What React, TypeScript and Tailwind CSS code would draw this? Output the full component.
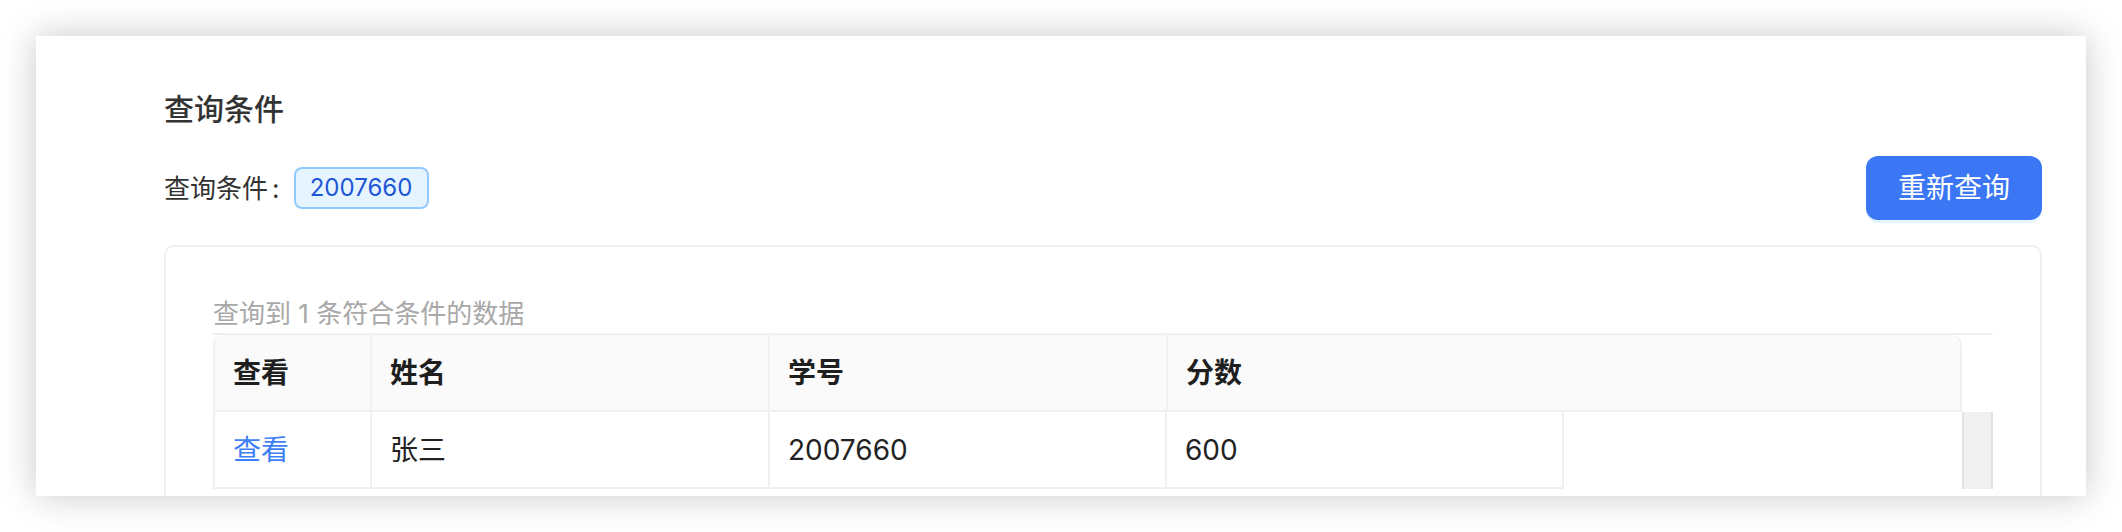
import React from "react";

type Row = { name: string; id: string; score: string };

const rows: Row[] = [{ name: "张三", id: "2007660", score: "600" }];

const headers = ["查看", "姓名", "学号", "分数"];
// column widths in px, borders included
const colWidths = ["w-[159px]", "w-[398px]", "w-[397px]", "w-[397px]"];

function ResultTable() {
  return (
    <div className="w-[1780px] border-t-2 border-[#f0f0f0]">
      {/* header */}
      <div className="flex h-[77px]">
        <div className="flex flex-1 rounded-t-[10px] border-b-2 border-[#f0f0f0] bg-[#fafafa]">
          {headers.map((h, i) => (
            <div
              key={h}
              className={
                "flex items-center pl-[18px] text-[28px] font-semibold text-[#1f1f1f] " +
                (i === 0
                  ? "w-[159px] rounded-tl-[10px] border-x-2 border-[#f0f0f0]"
                  : i === 3
                  ? "flex-1 rounded-tr-[10px] border-r-2 border-[#f0f0f0]"
                  : "w-[398px] border-r-2 border-[#f0f0f0]")
              }
            >
              {h}
            </div>
          ))}
        </div>
        <div className="w-[31px] rounded-tr-[10px] bg-white" />
      </div>

      {/* body */}
      {rows.map((r) => (
        <div key={r.id} className="flex h-[77px]">
          <div className="flex w-[1749px]">
            <div className={colWidths[0] + " flex items-center border-x-2 border-b-2 border-[#f0f0f0] pl-[18px] text-[28px] text-[#3d7ff6]"}>
              查看
            </div>
            <div className={colWidths[1] + " flex items-center border-r-2 border-b-2 border-[#f0f0f0] pl-[18px] text-[28px] text-[#222]"}>
              {r.name}
            </div>
            <div className={colWidths[2] + " flex items-center border-r-2 border-b-2 border-[#f0f0f0] pl-[18px] text-[28px] text-[#222]"}>
              {r.id}
            </div>
            <div className={colWidths[3] + " flex items-center border-r-2 border-b-2 border-[#f0f0f0] pl-[18px] text-[28px] text-[#222]"}>
              {r.score}
            </div>
          </div>
          <div className="w-[31px] border-x-2 border-[#e2e2e2] bg-[#f0f0f0]" />
        </div>
      ))}
    </div>
  );
}

export default function App() {
  return (
    <div className="h-[532px] w-[2122px] overflow-hidden bg-white p-[36px] font-['Inter','Noto_Sans_CJK_SC',sans-serif]">
      <div className="h-[460px] overflow-hidden bg-white pl-[128px] pr-[44px] pt-[51px] shadow-[0_0_34px_rgba(0,0,0,0.22)]">
        <h2 className="text-[30px] font-medium leading-[44px] text-[#333]">查询条件</h2>

        <div className="mt-[25px] flex items-center justify-between">
          <div className="flex items-center text-[26px] text-[#333]">
            <span>查询条件</span>
            <span className="ml-[4px]">:</span>
            <span className="ml-[14px] flex h-[42px] w-[135px] items-center justify-center rounded-[8px] border-2 border-[#91caff] bg-[#e6f4ff] text-[24px] text-[#1d56d6]">
              2007660
            </span>
          </div>
          <button className="h-[64px] w-[176px] rounded-[12px] bg-[#3b77f5] text-[28px] text-white shadow-[0_3px_0_rgba(5,145,255,0.1)]">
            重新查询
          </button>
        </div>

        <div className="mt-[25px] rounded-[10px] border-2 border-[#f0f0f0] px-[47px] pb-[48px] pt-[48px]">
          <p className="text-[26px] leading-[38px] text-[#a8a8a8]">查询到 1 条符合条件的数据</p>
          <ResultTable />
        </div>
      </div>
    </div>
  );
}
